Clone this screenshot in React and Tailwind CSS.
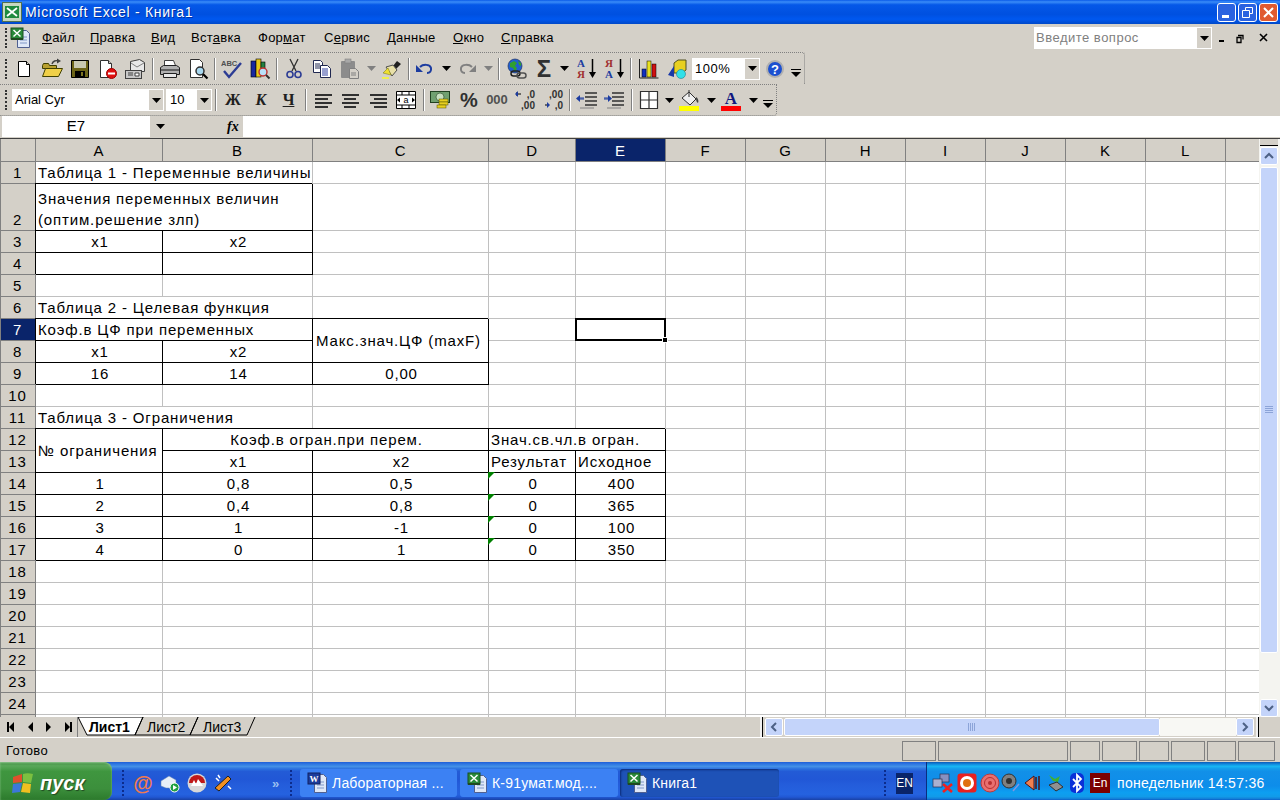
import React from 'react';

const UI = "font-['Liberation_Sans',Arial,sans-serif]";

// ---------- toolbar icons, all drawn on a 22px box ----------
const Ic = ({ children, className = '' }) => (
  <svg width="22" height="22" viewBox="0 0 22 22" className={className}>
    {children}
  </svg>
);

const IconNew = () => (
  <Ic>
    <path d="M5.5 3.5h8l3 3v12h-11z" fill="#fff" stroke="#000" />
    <path d="M13.5 3.5v3h3" fill="#d4d0c8" stroke="#000" />
  </Ic>
);
const IconOpen = () => (
  <Ic>
    <path d="M1.5 7.5l1-2h5l1 2h7v3h-14z" fill="#b8a030" stroke="#404000" />
    <path d="M1.5 18.5l3-8h17l-4 8z" fill="#f0d048" stroke="#404000" />
    <path d="M11 6c1-3 4-4 6-3" fill="none" stroke="#404040" strokeWidth="1.4" />
    <path d="M16 0.5l4 2.5-4 2.500z" fill="#404040" />
  </Ic>
);
const IconSave = () => (
  <Ic>
    <path d="M2.500 2.500h17v17h-17z" fill="#6c6418" stroke="#000" />
    <rect x="5" y="3" width="12" height="7" fill="#c8c8b0" />
    <rect x="6" y="13" width="10" height="6" fill="#000" />
    <rect x="12" y="14" width="2" height="4" fill="#7c7420" />
  </Ic>
);
const IconPerm = () => (
  <Ic>
    <path d="M3.500 2.500h8l3 3v14h-11z" fill="#fff" stroke="#303030" />
    <path d="M11.500 2.500v3h3" fill="#d4d0c8" stroke="#303030" />
    <circle cx="14.500" cy="15.500" r="5" fill="#e01010" stroke="#a00000" />
    <rect x="11" y="14.500" width="7" height="2" fill="#fff" />
  </Ic>
);
const IconMail = () => (
  <Ic>
    <path d="M5.500 3.500l9-2 5 3v9h-14z" fill="#e8e8e8" stroke="#404040" />
    <path d="M6 5l6 4 7-4" fill="none" stroke="#808080" />
    <rect x="0.500" y="12.500" width="16" height="8" fill="#c8c8c8" stroke="#404040" />
    <path d="M3 15h5M3 17h5M10 15h4v3h-4z" stroke="#404040" fill="#fff" />
  </Ic>
);
const IconPrint = () => (
  <Ic>
    <path d="M5.500 2.500h9l2 5h-11z" fill="#fff" stroke="#404040" />
    <path d="M1.500 9.500l3-2h13l3 2v7h-19z" fill="#b0b0b0" stroke="#202020" />
    <rect x="2" y="11" width="18" height="2" fill="#606060" />
    <path d="M4.500 15.500h13v4h-13z" fill="#e8e8e8" stroke="#202020" />
  </Ic>
);
const IconPreview = () => (
  <Ic>
    <path d="M3.500 1.500h9l3 3v15h-12z" fill="#fff" stroke="#303030" />
    <circle cx="13" cy="13" r="4" fill="#a8d8f0" stroke="#303030" strokeWidth="1.500" />
    <path d="M16 16l4.500 4.500" stroke="#000" strokeWidth="2.200" />
  </Ic>
);
const IconSpell = () => (
  <Ic>
    <text x="0" y="8" fontSize="7.500" fontWeight="700" fill="#505050" fontFamily="Liberation Sans">ABC</text>
    <path d="M3 13l5 6 12-14" fill="none" stroke="#2c3c94" strokeWidth="2.400" />
  </Ic>
);
const IconResearch = () => (
  <Ic>
    <rect x="2" y="3" width="5" height="16" fill="#1828a0" stroke="#000" strokeWidth="0.600" />
    <rect x="7" y="1" width="5" height="18" fill="#e8c818" stroke="#000" strokeWidth="0.600" />
    <rect x="12" y="4" width="4" height="8" fill="#208040" stroke="#000" strokeWidth="0.600" />
    <circle cx="14" cy="14" r="4" fill="#b8e0f8" stroke="#c03030" strokeWidth="1.400" />
    <path d="M17 17l3.500 3.500" stroke="#303030" strokeWidth="2" />
  </Ic>
);
const IconCut = () => (
  <Ic>
    <path d="M7 1l6 12M15 1l-6 12" stroke="#303030" strokeWidth="1.300" fill="none" />
    <circle cx="7" cy="16.500" r="3" fill="none" stroke="#2c3c94" strokeWidth="1.600" />
    <circle cx="15" cy="16.500" r="3" fill="none" stroke="#2c3c94" strokeWidth="1.600" />
  </Ic>
);
const IconCopy = () => (
  <Ic>
    <path d="M2.500 2.500h7l2 2v10h-9z" fill="#fff" stroke="#202850" />
    <path d="M4 6h5M4 8h5M4 10h5" stroke="#202850" />
    <path d="M9.500 7.500h7l3 3v9h-10z" fill="#fff" stroke="#202850" />
    <path d="M11 11h6M11 13h6M11 15h6M11 17h6" stroke="#3040a0" />
  </Ic>
);
const IconPaste = () => (
  <Ic>
    <rect x="2" y="3" width="14" height="17" rx="1" fill="#8c8c8c" />
    <rect x="6" y="1" width="6" height="4" fill="#a8a8a8" stroke="#808080" strokeWidth="0.600" />
    <path d="M10.500 10.500h6l3 3v7h-9z" fill="#d4d0c8" stroke="#808080" />
    <path d="M12 15h5M12 17h5" stroke="#808080" />
  </Ic>
);
const IconBrush = () => (
  <Ic>
    <path d="M12 8l4-5 4 3-5 5z" fill="#202020" />
    <path d="M5 9l7-2 4 5-5 6z" fill="#e8e0a8" stroke="#505050" />
    <path d="M2 15l5-5 3 7z" fill="#f0e030" stroke="#808020" strokeWidth="0.600" />
    <rect x="1" y="19" width="7" height="2" fill="#f0f050" />
  </Ic>
);
const IconUndo = ({ off }) => (
  <Ic>
    <path d="M6 9c3-3 10-3 11 1 .5 3-1 5-4 5" fill="none" stroke={off ? '#808080' : '#1c3ca0'} strokeWidth="2" />
    <path d="M2 7v7h7z" fill={off ? '#808080' : '#1c3ca0'} />
  </Ic>
);
const IconLink = () => (
  <Ic>
    <circle cx="9" cy="8" r="7" fill="#2060d0" stroke="#203060" strokeWidth="0.700" />
    <path d="M4 5l4-2 3 2-2 3 2 2-2 4-2-4-3-1zM12 3l3 2 0 3-2-1z" fill="#30a030" />
    <rect x="5" y="13" width="9" height="5" rx="2.500" fill="none" stroke="#202020" strokeWidth="1.500" />
    <rect x="11" y="15" width="9" height="5" rx="2.500" fill="none" stroke="#505050" strokeWidth="1.500" />
  </Ic>
);
const IconSort = ({ up, down, upC, downC }) => (
  <Ic>
    <text x="1" y="9" fontSize="11" fontWeight="700" fill={upC} fontFamily="Liberation Serif">{up}</text>
    <text x="1" y="20" fontSize="11" fontWeight="700" fill={downC} fontFamily="Liberation Serif">{down}</text>
    <path d="M16.500 1v15" stroke="#000" strokeWidth="1.500" />
    <path d="M13 14h7l-3.500 6z" fill="#000" />
  </Ic>
);
const IconChart = () => (
  <Ic>
    <path d="M1.500 1v19h19" fill="none" stroke="#202020" />
    <rect x="4" y="11" width="4" height="8" fill="#1030c0" stroke="#000" strokeWidth="0.500" />
    <rect x="9" y="3" width="4" height="16" fill="#e8e020" stroke="#000" strokeWidth="0.500" />
    <rect x="14" y="6" width="4" height="13" fill="#d01010" stroke="#000" strokeWidth="0.500" />
  </Ic>
);
const IconDraw = () => (
  <Ic>
    <path d="M7 5l4-3h8v10l-4 3H7z" fill="#e8d020" stroke="#505020" />
    <path d="M1 17l6-9v11z" fill="#1838a8" />
    <circle cx="14" cy="16" r="4.500" fill="#30e0e8" stroke="#208090" strokeWidth="0.600" />
  </Ic>
);
const IconHelp = () => (
  <Ic>
    <circle cx="11" cy="11" r="8" fill="#1c50d0" stroke="#b0b0b0" strokeWidth="2" />
    <text x="11" y="15.500" textAnchor="middle" fontSize="13" fontWeight="700" fill="#fff" fontFamily="Liberation Sans">?</text>
  </Ic>
);
const Overflow = () => (
  <svg width="10" height="10" viewBox="0 0 10 10">
    <path d="M0 1.500h10" stroke="#000" />
    <path d="M0 4h10L5 9z" fill="#000" />
  </svg>
);
const Arrow = ({ c = '#000' }) => (
  <svg width="9" height="5" viewBox="0 0 9 5">
    <path d="M0 0h9L4.500 5z" fill={c} />
  </svg>
);
const IconAlign = ({ type }) => {
  const xs = {
    left: [[3, 17], [3, 13], [3, 17], [3, 13]],
    center: [[3, 17], [5, 12], [3, 17], [5, 12]],
    right: [[3, 17], [7, 13], [3, 17], [7, 13]],
  }[type];
  return (
    <Ic>
      {xs.map(([x, w], i) => (
        <rect key={i} x={x} y={5 + i * 4} width={w} height="2" fill="#303030" />
      ))}
    </Ic>
  );
};
const IconMerge = () => (
  <Ic>
    <path d="M1.500 2.500h19v17h-19z" fill="#fff" stroke="#000" />
    <path d="M1 6h20M1 16h20M7 2v4M14 2v4M7 16v4M14 16v4" stroke="#000" />
    <text x="11" y="14" textAnchor="middle" fontSize="9" fill="#000" fontFamily="Liberation Sans">a</text>
    <path d="M2 11l3-2.500v5zM20 11l-3-2.500v5z" fill="#000" />
  </Ic>
);
const IconMoney = () => (
  <Ic>
    <rect x="0.500" y="2.500" width="19" height="11" fill="#70a070" stroke="#204020" />
    <circle cx="10" cy="8" r="4" fill="#c8e0c0" stroke="#204020" strokeWidth="0.600" />
    <rect x="9" y="10" width="9" height="3" fill="#e8d020" stroke="#505000" strokeWidth="0.500" />
    <rect x="9" y="13" width="9" height="3" fill="#e8d020" stroke="#505000" strokeWidth="0.500" />
    <rect x="7" y="16" width="9" height="3" fill="#e8d020" stroke="#505000" strokeWidth="0.500" />
  </Ic>
);
const IconDec = ({ more }) => (
  <Ic>
    <text x="21" y="9" textAnchor="end" fontSize="10" fontWeight="700" fill="#303030" fontFamily="Liberation Sans">{more ? ',0' : ',00'}</text>
    <text x="21" y="20" textAnchor="end" fontSize="10" fontWeight="700" fill="#303030" fontFamily="Liberation Sans">{more ? ',00' : ',0'}</text>
    <path d={more ? 'M3 5h4M3 3v4' : 'M3 16h4'} stroke="#000" fill="none" />
    <path d={more ? 'M1 5l3-3v6z' : 'M8 16l-3-3v6z'} fill="#1c3ca0" />
  </Ic>
);
const IconIndent = ({ more }) => (
  <Ic>
    <path d="M9 4h12M9 8h12M9 12h12M9 16h12" stroke="#303030" strokeWidth="1.500" />
    <path d="M4 19h14" stroke="#808080" />
    <path d={more ? 'M1 9h4M1 10h4' : 'M3 9h5M3 10h5'} stroke="#1c3ca0" />
    <path d={more ? 'M5 6l4 3.500-4 3.500z' : 'M4 6L0 9.500 4 13z'} fill="#1c3ca0" />
  </Ic>
);
const IconBorders = () => (
  <Ic>
    <path d="M2.500 2.500h17v17h-17zM11 2v18M2 11h18" fill="#fff" stroke="#303030" strokeWidth="1.200" />
  </Ic>
);
const IconFill = () => (
  <Ic>
    <path d="M3 9l7-6 7 7-6 6z" fill="#f0f0f0" stroke="#303030" />
    <path d="M10 1v7" stroke="#303030" />
    <path d="M17 8c2 1 3 4 2 6-2-1-2-4-2-6z" fill="#404040" />
    <rect x="0" y="17" width="20" height="5" fill="#ffff00" />
  </Ic>
);
const IconColor = () => (
  <Ic>
    <text x="10" y="15" textAnchor="middle" fontSize="17" fontWeight="700" fill="#101880" fontFamily="Liberation Serif">A</text>
    <rect x="0" y="17" width="20" height="5" fill="#ff0000" />
  </Ic>
);
const XlDoc = ({ size = 22 }) => (
  <svg width={size} height={size} viewBox="0 0 22 22">
    <path d="M7.500 3.500h9l3 3v14h-12z" fill="#dfe8f8" stroke="#506090" />
    <path d="M10 10h7M10 13h7M10 16h7" stroke="#8098c8" />
    <rect x="1" y="1" width="12" height="11" fill="#2a8a3a" stroke="#1a5020" />
    <path d="M3.500 3l7 6.500M10.500 3l-7 6.500" stroke="#fff" strokeWidth="1.500" />
    <rect x="1" y="11" width="12" height="2" fill="#204820" />
  </svg>
);

// ---------- toolbar pieces ----------
const Grip = ({ className = '' }) => (
  <div className={'h-[20px] w-[2px] border-l-2 border-dotted border-[#333] ' + className} />
);
const Sep = ({ className = 'w-[6px]' }) => (
  <div className={'flex justify-center ' + className}>
    <div className="h-[22px] w-[2px] border-x border-l-[#808080] border-r-white" />
  </div>
);
const Slot = ({ className = 'w-[28px]', children }) => (
  <div className={'flex h-full shrink-0 items-center justify-center ' + className}>{children}</div>
);
const Drop = ({ className = 'w-[14px]', c }) => (
  <Slot className={className}>
    <Arrow c={c} />
  </Slot>
);
const Combo = ({ className, btn, text, color = 'text-black', pad = 'pl-[3px]' }) => (
  <div className={'flex h-[22px] items-center bg-white ' + className}>
    <span className={'flex-1 text-[13px] ' + pad + ' ' + color}>{text}</span>
    <div className={'flex h-[20px] items-center justify-center bg-[#d4d0c8] mr-px ' + btn}>
      <Arrow />
    </div>
  </div>
);

// ---------- sheet data ----------
const colClasses = ['w-[127px]', 'w-[150px]', 'w-[176px]', 'w-[87px]', 'w-[90px]', 'w-[80px]', 'w-[80px]', 'w-[80px]', 'w-[80px]', 'w-[80px]', 'w-[80px]', 'w-[80px]', 'w-[34px]'];
const colNames = ['A', 'B', 'C', 'D', 'E', 'F', 'G', 'H', 'I', 'J', 'K', 'L', ''];

const c = (t) => ({ t, center: true, box: true });
const numRow = (n, a, b, x2, base) => ({
  n,
  cells: [c(a), c(b), c(x2), { t: '0', center: true, box: true, mark: true }, c(base)],
  used: 5,
});

const sheet = [
  { n: 1, cells: [{ t: 'Таблица 1 - Переменные величины', cs: 2 }], used: 2 },
  { n: 2, tall: true, cells: [{ t: 'Значения переменных величин', t2: '(оптим.решение злп)', cs: 2, box: true }], used: 2 },
  { n: 3, cells: [c('х1'), c('х2')], used: 2 },
  { n: 4, cells: [c(''), c('')], used: 2 },
  { n: 5, cells: [], used: 0 },
  { n: 6, cells: [{ t: 'Таблица 2 - Целевая функция', cs: 2 }], used: 2 },
  {
    n: 7,
    active: true,
    cells: [
      { t: 'Коэф.в ЦФ при переменных', cs: 2, box: true },
      { t: 'Макс.знач.ЦФ (maxF)', rs: 2, center: true, box: true, mid: true, tight: true },
      { t: '' },
      { t: '', selected: true },
    ],
    used: 5,
  },
  { n: 8, cells: [c('х1'), c('х2')], used: 3 },
  { n: 9, cells: [c('16'), c('14'), c('0,00')], used: 3 },
  { n: 10, cells: [], used: 0 },
  { n: 11, cells: [{ t: 'Таблица 3 - Ограничения', cs: 2 }], used: 2 },
  {
    n: 12,
    cells: [
      { t: '№ ограничения', rs: 2, box: true, mid: true },
      { t: 'Коэф.в огран.при перем.', cs: 2, center: true, box: true },
      { t: 'Знач.св.чл.в огран.', cs: 2, box: true },
    ],
    used: 5,
  },
  { n: 13, cells: [c('х1'), c('х2'), { t: 'Результат', box: true }, { t: 'Исходное', box: true }], used: 5 },
  numRow(14, '1', '0,8', '0,5', '400'),
  numRow(15, '2', '0,4', '0,8', '365'),
  numRow(16, '3', '1', '-1', '100'),
  numRow(17, '4', '0', '1', '350'),
  ...Array.from({ length: 7 }, (_, i) => ({ n: 18 + i, cells: [], used: 0 })),
  // the next row only peeks out under row 24, its number is hidden
  { n: '', cells: [], used: 0 },
];

const Cell = ({ cell }) => {
  const border = cell.box
    ? 'border-black shadow-[-1px_-1px_0_0_#000]'
    : 'border-[#c0c0c0]';
  return (
    <td
      colSpan={cell.cs}
      rowSpan={cell.rs}
      className={
        'relative overflow-visible whitespace-nowrap border-r border-b p-0 leading-[21px] ' +
        border + ' ' +
        (cell.tight ? 'pr-[4px] ' : 'pl-[2px] ') +
        (cell.mid ? 'align-middle ' : 'align-bottom ') +
        (cell.center ? 'text-center' : 'text-left')
      }
    >
      {cell.t}
      {cell.t2 && <br />}
      {cell.t2}
      {cell.mark && (
        <span className="absolute -left-px -top-px h-0 w-0 border-t-[7px] border-r-[7px] border-t-[#008000] border-r-transparent" />
      )}
      {cell.selected && (
        <span className="absolute -left-px -top-px -bottom-px right-[-1px] z-10 border-2 border-black">
          <span className="absolute -bottom-[4px] -right-[4px] h-[6px] w-[6px] border border-white bg-black" />
        </span>
      )}
    </td>
  );
};

const Sheet = () => (
  <table className="w-[1259px] table-fixed border-separate border-spacing-0 bg-white text-[15px] tracking-[0.85px] text-black font-['Liberation_Sans',Arial,sans-serif]">
    <colgroup>
      <col className="w-[36px]" />
      {colClasses.map((w, i) => (
        <col key={i} className={w} />
      ))}
    </colgroup>
    <tbody>
      <tr className="h-[23px]">
        <td className="border-r border-b border-[#808080] bg-[#d4d0c8] p-0 shadow-[inset_1px_0_0_#808080]" />
        {colNames.map((name) => (
          <td
            key={name}
            className={
              'border-r border-b border-[#808080] p-0 text-center leading-[21px] ' +
              (name === 'E' ? 'bg-[#0a246a] text-white' : 'bg-[#d4d0c8]')
            }
          >
            {name}
          </td>
        ))}
      </tr>
      {sheet.map((row, r) => (
        <tr key={r} className={row.tall ? 'h-[47px]' : 'h-[22px]'}>
          <td
            className={
              'border-r border-b border-[#808080] p-0 text-center align-bottom leading-[21px] shadow-[inset_1px_0_0_#808080] ' +
              (row.active ? 'bg-[#0a246a] text-white' : 'bg-[#d4d0c8]')
            }
          >
            {row.n}
          </td>
          {row.cells.map((cell, i) => (
            <Cell key={i} cell={cell} />
          ))}
          {Array.from({ length: 13 - row.used }, (_, i) => (
            <td key={'e' + i} className="border-r border-b border-[#c0c0c0] p-0" />
          ))}
        </tr>
      ))}
    </tbody>
  </table>
);

// ---------- scrollbars ----------
const ScrollBtn = ({ d, className = '' }) => (
  <div className={'flex h-[18px] w-[18px] shrink-0 items-center justify-center rounded-[2px] border border-white bg-[#c4d4fa] ' + className}>
    <svg width="10" height="10" viewBox="0 0 10 10">
      <path d={d} fill="none" stroke="#4d6185" strokeWidth="2" />
    </svg>
  </div>
);
const Ridges = ({ vertical }) => (
  <svg width="8" height="8" viewBox="0 0 8 8">
    {[0, 2, 4, 6].map((p) =>
      vertical ? (
        <rect key={p} x="0" y={p} width="8" height="1" fill="#8ca4d8" />
      ) : (
        <rect key={p} x={p} y="0" width="1" height="8" fill="#8ca4d8" />
      )
    )}
  </svg>
);

// ---------- taskbar ----------
const Task = ({ className, icon, label }) => (
  <div className={'flex h-[28px] items-center gap-[3px] rounded-[3px] pl-[7px] text-[14px] tracking-[0.2px] text-white ' + className}>
    {icon}
    <span>{label}</span>
  </div>
);
const WordDoc = () => (
  <svg width="22" height="22" viewBox="0 0 22 22">
    <path d="M7.500 2.500h9l3 3v15h-12z" fill="#dfe8f8" stroke="#506090" />
    <path d="M10 10h7M10 13h7M10 16h7" stroke="#8098c8" />
    <rect x="1" y="1" width="12" height="11" fill="#1c3c9c" stroke="#102060" />
    <text x="7" y="10" textAnchor="middle" fontSize="9" fontWeight="700" fill="#fff" fontFamily="Liberation Serif">W</text>
  </svg>
);
const Quick = () => (
  <div className="flex h-full items-center">
    <Slot className="w-[26px]">
      <span className="text-[20px] font-bold leading-none text-[#f07a50]">@</span>
    </Slot>
    <Slot className="w-[27px]">
      <svg width="20" height="20" viewBox="0 0 20 20">
        <path d="M1 8l8-5 7 4v8H6l-5-2z" fill="#e8eef8" stroke="#6080b0" strokeWidth="0.500" />
        <circle cx="14.500" cy="14.500" r="4.500" fill="#20a040" stroke="#fff" />
        <path d="M13 12l4 2.500-4 2.500z" fill="#fff" />
      </svg>
    </Slot>
    <Slot className="w-[27px]">
      <svg width="20" height="20" viewBox="0 0 20 20">
        <circle cx="10" cy="10" r="9.500" fill="#d8d8d8" />
        <path d="M2 10a8 8 0 0 1 16 0z" fill="#c01818" />
        <path d="M4 13l3-6 2 4 2-5 3 4 2 3z" fill="#fff" />
      </svg>
    </Slot>
    <Slot className="w-[26px]">
      <svg width="20" height="20" viewBox="0 0 20 20">
        <path d="M2 15L15 3l3 3-12 12z" fill="#f09020" stroke="#202020" />
        <path d="M3 5l3 3M15 13l3 3M5 2l2 3" stroke="#fff" strokeWidth="1.500" />
      </svg>
    </Slot>
  </div>
);
const Tray = () => (
  <div className="flex items-center gap-[3px]">
    <svg width="22" height="20" viewBox="0 0 22 20">
      <rect x="8" y="1" width="9" height="8" fill="#8890c0" stroke="#303050" strokeWidth="0.700" />
      <rect x="1" y="6" width="9" height="8" fill="#a8b0d0" stroke="#303050" strokeWidth="0.700" />
      <path d="M11 11l9 8M20 11l-9 8" stroke="#f02020" strokeWidth="2.600" />
    </svg>
    <svg width="20" height="20" viewBox="0 0 20 20">
      <rect x="0.500" y="0.500" width="19" height="19" rx="3" fill="#e82020" />
      <circle cx="10" cy="10" r="7" fill="#fff" />
      <circle cx="10" cy="10" r="4" fill="#e07010" />
    </svg>
    <svg width="20" height="20" viewBox="0 0 20 20">
      <circle cx="10" cy="10" r="9" fill="#e87070" stroke="#c03838" />
      <circle cx="10" cy="10" r="5.500" fill="none" stroke="#b83030" />
      <circle cx="10" cy="10" r="2" fill="#b83030" />
    </svg>
    <svg width="20" height="20" viewBox="0 0 20 20" className="-ml-[2px]">
      <circle cx="8" cy="8" r="7" fill="#808080" stroke="#303030" />
      <circle cx="8" cy="8" r="3" fill="#303030" />
      <path d="M12 18l6-7" stroke="#8098e0" strokeWidth="1.500" />
    </svg>
    <svg width="18" height="20" viewBox="0 0 18 20">
      <path d="M1 10l9-7v14z" fill="#f08050" stroke="#501010" />
      <path d="M12 4v12M15 3v14" stroke="#501010" strokeWidth="1.500" />
    </svg>
    <svg width="20" height="20" viewBox="0 0 20 20">
      <path d="M4 2l6 4 5-3-2 6-5-1z" fill="#40b030" />
      <path d="M4 12l8-3 6 5-7 4z" fill="#909090" stroke="#303030" />
    </svg>
    <svg width="20" height="20" viewBox="0 0 20 20" className="-ml-[1px]">
      <rect x="3" y="0" width="14" height="20" rx="5" fill="#0a30d8" />
      <path d="M6 6l8 8-4 4V2l4 4-8 8" fill="none" stroke="#fff" strokeWidth="1.800" />
    </svg>
    <span className="flex h-[20px] w-[20px] items-center justify-center bg-[#7c0000] text-[12px] text-white">En</span>
  </div>
);

export default function App() {
  return (
    <div className={'flex h-[800px] w-[1280px] flex-col overflow-hidden bg-[#d4d0c8] text-black ' + UI}>
      {/* title bar */}
      <div className="flex h-[24px] shrink-0 items-center bg-[linear-gradient(#0a5ae8_0%,#3a8cf8_8%,#0558e8_20%,#0050e0_60%,#0058f0_80%,#0048c8_100%)] pl-[2px] pr-[2px]">
        <svg width="20" height="20" viewBox="0 0 20 20">
          <rect x="0.500" y="0.500" width="19" height="19" fill="#c8d8c0" stroke="#507050" />
          <rect x="3" y="4" width="14" height="12" fill="#1f8a3f" />
          <path d="M5 6l10 8M15 6L5 14" stroke="#fff" strokeWidth="1.800" />
        </svg>
        <span className="ml-[3px] flex-1 text-[14px] tracking-[0.7px] text-white [text-shadow:1px_1px_0_#0030a0]">Microsoft Excel - Книга1</span>
        <div className="flex h-[19px] w-[19px] items-end rounded-[3px] border border-white bg-[#2a62e0] pb-[3px] pl-[4px]">
          <div className="h-[3px] w-[7px] bg-white" />
        </div>
        <div className="ml-[2px] flex h-[19px] w-[19px] items-center justify-center rounded-[3px] border border-white bg-[#2a62e0]">
          <svg width="11" height="11" viewBox="0 0 11 11">
            <path d="M3.500 3V.500h7v6H8M.500 3.500h7v7h-7z" fill="none" stroke="#fff" />
          </svg>
        </div>
        <div className="ml-[2px] flex h-[19px] w-[19px] items-center justify-center rounded-[3px] border border-white bg-[#e05a30]">
          <svg width="11" height="11" viewBox="0 0 11 11">
            <path d="M1 1l9 9M10 1l-9 9" stroke="#fff" strokeWidth="2" />
          </svg>
        </div>
      </div>

      {/* menu */}
      <div className="flex h-[28px] shrink-0 items-center text-[13px] tracking-[0.25px]">
        <Grip className="ml-[5px]" />
        <div className="ml-[3px] w-[32px]">
          <XlDoc />
        </div>
        <span className="w-[48px]"><u>Ф</u>айл</span>
        <span className="w-[61px]"><u>П</u>равка</span>
        <span className="w-[40px]"><u>В</u>ид</span>
        <span className="w-[67px]">Вст<u>а</u>вка</span>
        <span className="w-[66px]">Фор<u>м</u>ат</span>
        <span className="w-[63px]">С<u>е</u>рвис</span>
        <span className="w-[66px]"><u>Д</u>анные</span>
        <span className="w-[48px]"><u>О</u>кно</span>
        <span className="w-[533px]"><u>С</u>правка</span>
        <Combo className="w-[178px]" btn="w-[14px]" text="Введите вопрос" color="text-[#808080] tracking-[0.5px]" pad="pl-[2px]" />
        <div className="ml-[6px] flex w-[60px] items-center">
          <svg width="60" height="12" viewBox="0 0 60 12">
            <path d="M1 9h5" stroke="#000" strokeWidth="2" />
            <path d="M20 3.500h5v4M19 5.500h4v5h-4z" fill="none" stroke="#000" strokeWidth="1.300" />
            <path d="M42 2l7 7M49 2l-7 7" stroke="#000" strokeWidth="1.600" />
          </svg>
        </div>
      </div>

      {/* standard toolbar */}
      <div className="flex h-[32px] w-[805px] shrink-0 items-center rounded-tr-[3px] border-t border-r border-dotted border-[#808080]">
        <Grip className="ml-[5px] mr-[3px]" />
        <Slot><IconNew /></Slot>
        <Slot><IconOpen /></Slot>
        <Slot><IconSave /></Slot>
        <Slot><IconPerm /></Slot>
        <Slot><IconMail /></Slot>
        <Sep />
        <Slot><IconPrint /></Slot>
        <Slot><IconPreview /></Slot>
        <Sep />
        <Slot><IconSpell /></Slot>
        <Slot><IconResearch /></Slot>
        <Sep />
        <Slot><IconCut /></Slot>
        <Slot><IconCopy /></Slot>
        <Slot><IconPaste /></Slot>
        <Drop c="#808080" />
        <Slot><IconBrush /></Slot>
        <Sep />
        <Slot className="w-[26px]"><IconUndo /></Slot>
        <Drop className="w-[16px]" />
        <Slot className="w-[26px] [&>svg]:-scale-x-100"><IconUndo off /></Slot>
        <Drop className="w-[16px]" c="#808080" />
        <Sep />
        <Slot className="w-[30px]"><IconLink /></Slot>
        <Slot className="w-[24px] text-[24px] font-bold leading-none text-[#303030]">Σ</Slot>
        <Drop className="w-[16px]" />
        <Slot className="w-[30px]"><IconSort up="А" down="Я" upC="#1c3ca0" downC="#a03030" /></Slot>
        <Slot className="w-[26px]"><IconSort up="Я" down="А" upC="#a03030" downC="#1c3ca0" /></Slot>
        <Sep />
        <Slot className="w-[30px]"><IconChart /></Slot>
        <Slot><IconDraw /></Slot>
        <Combo className="w-[68px]" btn="w-[14px]" text="100%" color="text-black tracking-[0.5px]" />
        <Slot className="ml-px w-[28px]"><IconHelp /></Slot>
        <Slot className="w-[14px] pt-[8px]"><Overflow /></Slot>
      </div>

      {/* formatting toolbar */}
      <div className="flex h-[32px] w-[777px] shrink-0 items-center rounded-br-[3px] border-t border-r border-b border-dotted border-[#808080]">
        <Grip className="ml-[5px] mr-[5px]" />
        <Combo className="w-[152px]" btn="w-[14px]" text="Arial Cyr" />
        <Combo className="ml-[2px] w-[46px]" btn="w-[14px]" text="10" pad="pl-[4px]" />
        <Sep className="w-[7px]" />
        <Slot className="w-[28px] font-['Liberation_Serif',serif] text-[16px] font-bold text-[#202020]">Ж</Slot>
        <Slot className="w-[28px] font-['Liberation_Serif',serif] text-[16px] font-bold italic text-[#202020]">К</Slot>
        <Slot className="w-[27px] font-['Liberation_Serif',serif] text-[16px] font-bold text-[#202020] underline">Ч</Slot>
        <Sep className="w-[7px]" />
        <Slot className="w-[27px]"><IconAlign type="left" /></Slot>
        <Slot><IconAlign type="center" /></Slot>
        <Slot><IconAlign type="right" /></Slot>
        <Slot><IconMerge /></Slot>
        <Sep className="w-[7px]" />
        <Slot><IconMoney /></Slot>
        <Slot className="w-[28px] text-[20px] font-bold text-[#303030]">%</Slot>
        <Slot className="w-[28px] text-[13px] font-bold text-[#505050]">000</Slot>
        <Slot><IconDec more /></Slot>
        <Slot><IconDec /></Slot>
        <Sep />
        <Slot className="w-[27px]"><IconIndent /></Slot>
        <Slot><IconIndent more /></Slot>
        <Sep className="w-[7px]" />
        <Slot><IconBorders /></Slot>
        <Drop className="w-[13px]" />
        <Slot><IconFill /></Slot>
        <Drop />
        <Slot><IconColor /></Slot>
        <Drop />
        <Slot className="w-[16px] pt-[8px]"><Overflow /></Slot>
      </div>

      {/* formula bar */}
      <div className="flex h-[22px] shrink-0 items-start pl-[2px]">
        <div className="flex h-[21px] w-[148px] items-center justify-center bg-white text-[15px]">E7</div>
        <div className="flex h-[21px] w-[93px] items-center">
          <div className="ml-[6px]"><Arrow /></div>
          <span className="ml-[62px] font-['Liberation_Serif',serif] text-[14px] font-bold italic">fx</span>
        </div>
        <div className="h-[21px] flex-1 bg-white" />
      </div>

      {/* sheet + vertical scrollbar */}
      <div className="flex h-[579px] shrink-0 overflow-hidden border-t border-[#404040]">
        <div className="h-full overflow-hidden">
          <Sheet />
        </div>
        <div className="flex w-[21px] shrink-0 flex-col bg-[#f4f4f0] pl-px">
          <div className="h-[7px] w-[18px] border-b border-black bg-[#d4d0c8]" />
          <ScrollBtn d="M1 7l4-4 4 4" className="mt-px" />
          <div className="mt-[2px] flex h-[486px] w-[18px] items-center justify-center rounded-[2px] border border-white bg-[#c4d4fa]">
            <Ridges vertical />
          </div>
          <div className="flex-1" />
          <ScrollBtn d="M1 3l4 4 4-4" />
        </div>
      </div>

      {/* sheet tabs + horizontal scrollbar */}
      <div className="flex h-[21px] shrink-0 items-center border-b border-white text-[14px]">
        <div className="flex w-[78px] items-center">
          <svg width="78" height="20" viewBox="0 0 78 20">
            <path d="M7 5h2v10H7zM14 5v10l-5-5zM33 5v10l-5-5zM46 5v10l5-5zM65 5v10l5-5zM70 5h2v10h-2z" fill="#000" />
            <path d="M77.500 0v20" stroke="#808080" />
          </svg>
        </div>
        <div className="relative flex h-[20px] w-[180px] items-center">
          <svg width="180" height="20" viewBox="0 0 180 20" className="absolute inset-0">
            <path d="M0 0l9 18h48l8-18z" fill="#fff" stroke="#000" />
            <path d="M65 0l-8 18h55l8-18M120 0l-8 18h57l8-18" fill="none" stroke="#000" />
          </svg>
          <span className="relative ml-[11px] w-[58px] font-bold">Лист1</span>
          <span className="relative w-[56px]">Лист2</span>
          <span className="relative">Лист3</span>
        </div>
        <div className="w-[502px]" />
        <div className="h-[20px] w-[3px] border-r border-black bg-[#f0f0f0]" />
        <ScrollBtn d="M7 1L3 5l4 4" className="ml-[2px]" />
        <div className="ml-px flex h-[18px] w-[376px] items-center justify-center rounded-[2px] border border-white bg-[#c4d4fa]">
          <Ridges />
        </div>
        <div className="h-[18px] w-[76px] bg-[#f8f8f4]" />
        <ScrollBtn d="M3 1l4 4-4 4" />
        <div className="ml-[2px] h-[20px] w-[3px] border-r border-black bg-[#f0f0f0]" />
      </div>

      {/* status bar */}
      <div className="flex h-[24px] shrink-0 items-center pl-[6px] pt-[2px] text-[13px] tracking-[0.3px]">
        <span className="w-[896px]">Готово</span>
        <div className="h-[20px] w-[34px] border border-[#808080]" />
        <div className="ml-[2px] h-[20px] w-[130px] border border-[#808080]" />
        <div className="ml-[2px] h-[20px] w-[30px] border border-[#808080]" />
        <div className="ml-[2px] h-[20px] w-[35px] border border-[#808080]" />
        <div className="ml-[2px] h-[20px] w-[30px] border border-[#808080]" />
        <div className="ml-[2px] h-[20px] w-[34px] border border-[#808080]" />
        <div className="ml-[2px] h-[20px] w-[29px] border border-[#808080]" />
        <div className="ml-[2px] h-[20px] w-[37px] border border-[#808080]" />
      </div>

      {/* taskbar */}
      <div className="flex h-[38px] shrink-0 items-center bg-[linear-gradient(#1f5fd8_0%,#3682e5_8%,#4490e6_12%,#2b71e0_18%,#235bd6_25%,#2157d6_45%,#245ddb_60%,#2562df_85%,#2158d4_92%,#1941a5_100%)]">
        <div className="flex h-full w-[112px] items-center rounded-r-[8px] bg-[linear-gradient(#3c8a3c_0%,#5aa85a_10%,#3f963f_25%,#3c8f3c_70%,#2c7a2c_100%)] pl-[11px] pt-[3px] shadow-[inset_0_1px_2px_#90c890]">
          <svg width="24" height="24" viewBox="0 0 24 24">
            <path d="M2 6l9-3v8l-9 1z" fill="#e0502c" />
            <path d="M12 3c3-1 6-1 10 0l-2 9-8-1z" fill="#7cc040" />
            <path d="M2 13l9-1-2 9-8 1z" fill="#3c78d8" />
            <path d="M12 12l8 1-1 9c-3 0-6-1-9-1z" fill="#f0c020" />
          </svg>
          <span className="ml-[5px] text-[20px] font-bold italic text-white [text-shadow:1px_1px_1px_#204820]">пуск</span>
        </div>
        <div className="flex h-full flex-1 items-center pt-[4px]">
          <div className="ml-[10px] h-[26px] w-[2px] border-l-2 border-dotted border-[#0c2c8c]" />
          <div className="ml-[6px] h-full"><Quick /></div>
          <span className="ml-[36px] w-[16px] text-[13px] font-bold leading-none text-[#9cc0f0]">»</span>
          <div className="ml-[2px] mr-[8px] h-[26px] w-[2px] border-l-2 border-dotted border-[#0c2c8c]" />
          <Task className="w-[157px] bg-[#3c81f3]" icon={<WordDoc />} label="Лабораторная ..." />
          <Task className="ml-[3px] w-[158px] bg-[#3c81f3]" icon={<XlDoc />} label="К-91умат.мод...." />
          <Task className="ml-[2px] w-[159px] bg-[#1e52b7] shadow-[inset_1px_1px_2px_#0c2c78]" icon={<XlDoc />} label="Книга1" />
          <div className="ml-[105px] h-[26px] w-[2px] border-l-2 border-dotted border-[#0c2c8c]" />
          <span className="ml-[10px] flex h-[21px] w-[17px] items-center justify-center bg-[#0a246a] text-[12px] text-white">EN</span>
          <div className="flex-1" />
        </div>
        <div className="flex h-full w-[354px] shrink-0 items-center border-l border-[#092e80] bg-[linear-gradient(#0c59b9_0%,#139ee9_8%,#18b5f2_12%,#139beb_18%,#1290e8_25%,#0d8dea_63%,#0d9ff1_81%,#119be9_91%,#137ed7_97%,#095bc9_100%)] pl-[5px] pt-[4px]">
          <Tray />
          <span className="ml-[7px] whitespace-nowrap text-[14px] tracking-[0.3px] text-white">понедельник 14:57:36</span>
        </div>
      </div>
    </div>
  );
}
